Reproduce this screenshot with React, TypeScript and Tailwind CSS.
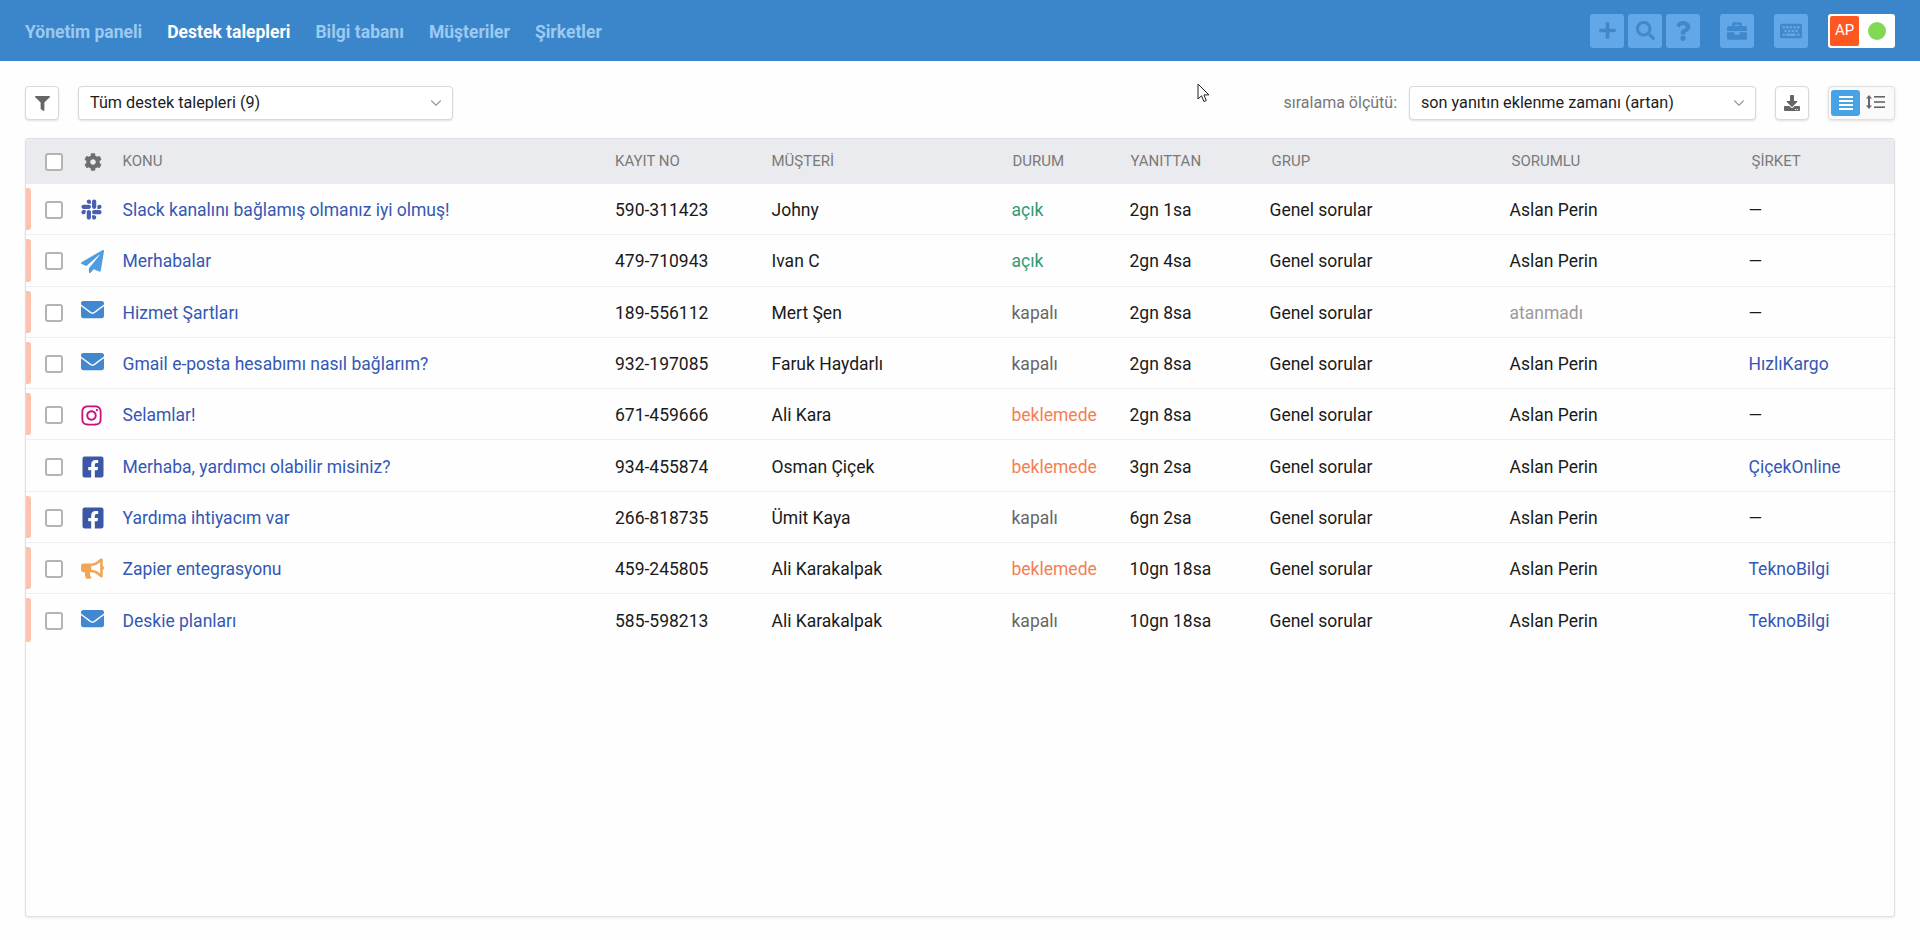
import React from "react";
import { ChevronDown } from "lucide-react";
import {
  FaFilter, FaCog, FaSlack, FaPaperPlane, FaEnvelope, FaInstagram, FaFacebookSquare, FaBullhorn,
  FaPlus, FaSearch, FaQuestion, FaBriefcase, FaKeyboard, FaDownload, FaAlignJustify,
} from "react-icons/fa";

type Row = {
  icon: React.ReactNode; subject: string; id: string; customer: string; status: string; statusCls: string;
  replied: string; owner: string; ownerMuted?: boolean; company: string; bar: boolean;
};

const green = "text-[#2f9a76]";
const gray = "text-[#666666]";
const orange = "text-[#f47e54]";
const mail = <FaEnvelope className="text-[23px] text-[#4188d0] -translate-y-[3px]" />;
const fb = <FaFacebookSquare className="text-[24px] text-[#3b57a5]" />;

const rows: Row[] = [
  { icon: <FaSlack className="text-[23px] text-[#4a5fb0] -ml-[1px] -translate-y-[1px]" />, subject: "Slack kanalını bağlamış olmanız iyi olmuş!", id: "590-311423", customer: "Johny", status: "açık", statusCls: green, replied: "2gn 1sa", owner: "Aslan Perin", company: "—", bar: true },
  { icon: <FaPaperPlane className="text-[23px] text-[#4f9cdf]" />, subject: "Merhabalar", id: "479-710943", customer: "Ivan C", status: "açık", statusCls: green, replied: "2gn 4sa", owner: "Aslan Perin", company: "—", bar: true },
  { icon: mail, subject: "Hizmet Şartları", id: "189-556112", customer: "Mert Şen", status: "kapalı", statusCls: gray, replied: "2gn 8sa", owner: "atanmadı", ownerMuted: true, company: "—", bar: true },
  { icon: mail, subject: "Gmail e-posta hesabımı nasıl bağlarım?", id: "932-197085", customer: "Faruk Haydarlı", status: "kapalı", statusCls: gray, replied: "2gn 8sa", owner: "Aslan Perin", company: "HızlıKargo", bar: true },
  { icon: <FaInstagram className="text-[23px] text-[#c8107e] -ml-[1px]" />, subject: "Selamlar!", id: "671-459666", customer: "Ali Kara", status: "beklemede", statusCls: orange, replied: "2gn 8sa", owner: "Aslan Perin", company: "—", bar: true },
  { icon: fb, subject: "Merhaba, yardımcı olabilir misiniz?", id: "934-455874", customer: "Osman Çiçek", status: "beklemede", statusCls: orange, replied: "3gn 2sa", owner: "Aslan Perin", company: "ÇiçekOnline", bar: false },
  { icon: fb, subject: "Yardıma ihtiyacım var", id: "266-818735", customer: "Ümit Kaya", status: "kapalı", statusCls: gray, replied: "6gn 2sa", owner: "Aslan Perin", company: "—", bar: true },
  { icon: <FaBullhorn className="text-[23px] text-[#f0a656] -translate-y-[1px]" />, subject: "Zapier entegrasyonu", id: "459-245805", customer: "Ali Karakalpak", status: "beklemede", statusCls: orange, replied: "10gn 18sa", owner: "Aslan Perin", company: "TeknoBilgi", bar: true },
  { icon: mail, subject: "Deskie planları", id: "585-598213", customer: "Ali Karakalpak", status: "kapalı", statusCls: gray, replied: "10gn 18sa", owner: "Aslan Perin", company: "TeknoBilgi", bar: true },
];

const gridCls = "grid grid-cols-[36px_41.5px_492.5px_156.5px_240px_118px_140px_240px_239px_1fr] items-center pl-[19px]";

function Check() {
  return <span className="block w-[18px] h-[18px] rounded-[3px] border-2 border-[#b4b4b4] bg-white" />;
}

function TopBtn({ children }: { children: React.ReactNode }) {
  return (
    <button className="w-[34px] h-[34px] rounded-[3px] bg-[#62a7e7] text-[#3f88cc] flex items-center justify-center">
      {children}
    </button>
  );
}

function Select({ label, width }: { label: string; width: string }) {
  return (
    <div className={`${width} h-[34px] bg-white border border-[#d9d9dc] rounded-[4px] shadow-[0_1px_2px_rgba(0,0,0,0.12)] flex items-center justify-between pl-[11px] pr-[7px] text-[16.2px] text-[#1c1c1c]`}>
      <span>{label}</span>
      <ChevronDown size={18} strokeWidth={1.5} className="text-[#9a9a9a]" />
    </div>
  );
}

export default function App() {
  return (
    <div className="relative h-[940px] overflow-hidden bg-[#fefefe] font-['Roboto',sans-serif]">
      <header className="h-[61px] bg-[#3b86cb] pl-[25px] pr-[25px] flex items-center justify-between">
        <nav className="flex items-center gap-[25px] text-[17.5px] font-bold text-[#9bc9f0] pt-[3px]">
          <span>Yönetim paneli</span>
          <span className="text-white">Destek talepleri</span>
          <span>Bilgi tabanı</span>
          <span>Müşteriler</span>
          <span>Şirketler</span>
        </nav>
        <div className="flex items-center">
          <div className="flex gap-[4px]">
            <TopBtn><FaPlus className="text-[19px]" /></TopBtn>
            <TopBtn><FaSearch className="text-[19px]" /></TopBtn>
            <TopBtn><FaQuestion className="text-[20px]" /></TopBtn>
          </div>
          <div className="ml-[20px]"><TopBtn><FaBriefcase className="text-[20px]" /></TopBtn></div>
          <div className="ml-[20px]"><TopBtn><FaKeyboard className="text-[22px]" /></TopBtn></div>
          <div className="ml-[20px] w-[67px] h-[34px] bg-white rounded-[3px] flex items-center pl-[2px]">
            <span className="w-[29px] h-[30px] bg-[#ff5722] rounded-[2px] text-white text-[15px] flex items-center justify-center">AP</span>
            <span className="ml-[9px] w-[18px] h-[18px] rounded-full bg-[#80d855]" />
          </div>
        </div>
      </header>

      <div className="h-[77px] pl-[25px] pr-[25px] flex items-start pt-[25px]">
        <button className="w-[34px] h-[34px] bg-white border border-[#d9d9dc] rounded-[4px] shadow-[0_1px_2px_rgba(0,0,0,0.12)] flex items-center justify-center text-[#666666]">
          <FaFilter className="text-[15px]" />
        </button>
        <div className="ml-[19px]"><Select label="Tüm destek talepleri (9)" width="w-[375px]" /></div>
        <div className="ml-auto flex items-center">
          <span className="text-[16px] text-[#777777] mr-[12px]">sıralama ölçütü:</span>
          <Select label="son yanıtın eklenme zamanı (artan)" width="w-[347px]" />
          <button className="ml-[19px] w-[34px] h-[34px] bg-white border border-[#d9d9dc] rounded-[4px] shadow-[0_1px_2px_rgba(0,0,0,0.12)] flex items-center justify-center text-[#666666]">
            <FaDownload className="text-[16px]" />
          </button>
          <div className="ml-[19px] w-[67px] h-[34px] bg-[#fafafb] border border-[#e0e0e3] rounded-[4px] shadow-[0_1px_3px_rgba(0,0,0,0.12)] flex items-center pl-[2px]">
            <span className="w-[29px] h-[26px] rounded-[3px] bg-[#47a3e6] text-white flex items-center justify-center">
              <FaAlignJustify className="text-[16px]" />
            </span>
            <span className="ml-[6px] mb-[3px] text-[#666666] flex items-center">
              <svg width="19" height="14" viewBox="0 0 19 14" fill="currentColor">
                <path d="M3 0 6 3.5H4v7h2L3 14 0 10.500h2v-7H0z" />
                <rect x="8" y="1" width="11" height="1.600" />
                <rect x="8" y="6.200" width="11" height="1.600" />
                <rect x="8" y="11.400" width="11" height="1.600" />
              </svg>
            </span>
          </div>
        </div>
      </div>

      <main className="mx-[25px] h-[779px] bg-[#fefefe] border border-[#dfe0e3] rounded-[3px] shadow-[0_1px_3px_rgba(0,0,0,0.08)]">
        <div className={`${gridCls} h-[45px] bg-[#eaebee] text-[15px] text-[#7a7a7a] uppercase`}>
          <Check />
          <FaCog className="text-[18px] text-[#6e6e6e] ml-[3px]" />
          <span>KONU</span>
          <span>KAYIT NO</span>
          <span>MÜŞTERİ</span>
          <span className="pl-[1px]">DURUM</span>
          <span className="pl-[1px]">YANITTAN</span>
          <span className="pl-[2px]">GRUP</span>
          <span className="pl-[2px]">SORUMLU</span>
          <span className="pl-[3px]">ŞİRKET</span>
        </div>
        {rows.map((r) => (
          <div key={r.id} className={`${gridCls} relative h-[51.3px] pt-[2px] border-b last:border-b-0 border-[#efeff1] text-[17.5px] text-[#1a1a1a]`}>
            {r.bar && <span className="absolute left-0 top-[4px] bottom-[4px] w-[5px] rounded-r-[3px] bg-[#fcc2af]" />}
            <Check />
            <span className="flex items-center h-[26px]">{r.icon}</span>
            <span className="text-[#3458b4]">{r.subject}</span>
            <span>{r.id}</span>
            <span>{r.customer}</span>
            <span className={r.statusCls}>{r.status}</span>
            <span>{r.replied}</span>
            <span>Genel sorular</span>
            <span className={r.ownerMuted ? "text-[#9a9a9a]" : ""}>{r.owner}</span>
            <span className={r.company === "—" ? "" : "text-[#3458b4]"}>{r.company}</span>
          </div>
        ))}
      </main>

      <svg className="absolute left-[1197px] top-[83px]" width="14" height="20" viewBox="0 0 14 20">
        <path d="M1 1v15l3.5-3.2 2.4 5.7 2.4-1-2.4-5.600h5z" fill="#fff" stroke="#222" strokeWidth="1" />
      </svg>
    </div>
  );
}
